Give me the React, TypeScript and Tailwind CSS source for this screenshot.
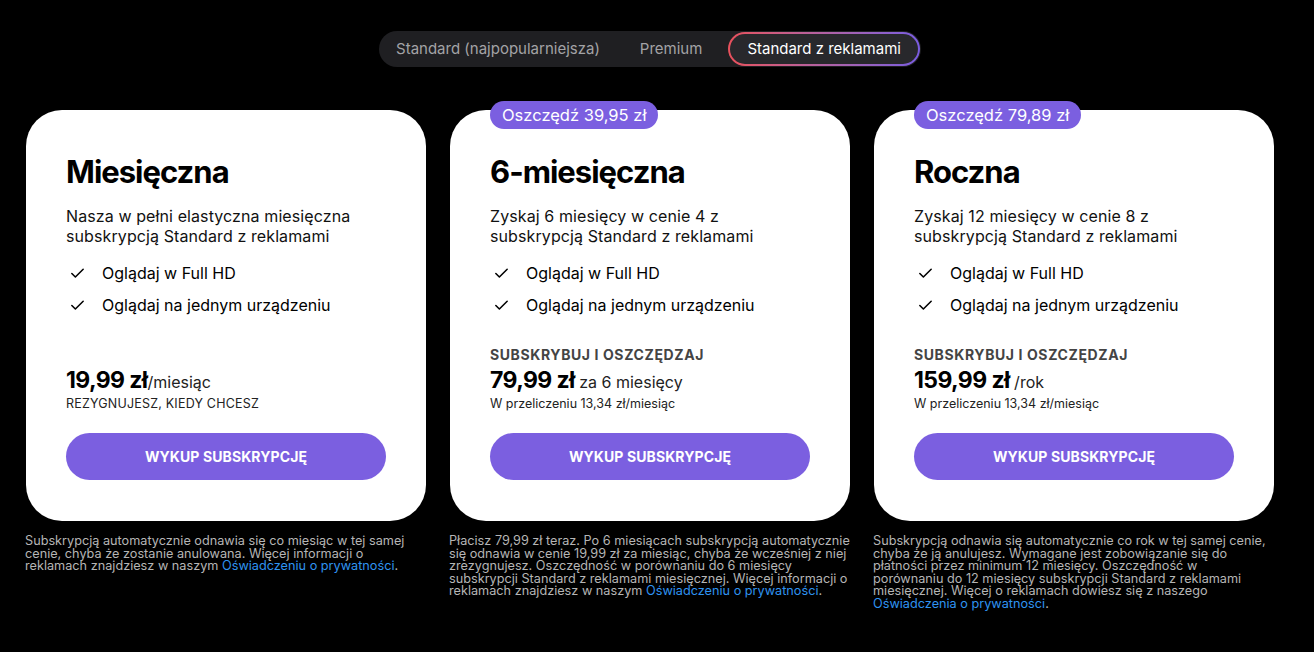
import { Check } from 'lucide-react'

type Plan = {
  title: string
  badge?: string
  desc: string[]
  eyebrow?: string
  price: string
  unit: string
  sub: string
  subUpper?: boolean
  note: string
  noteWidth: string
  link: string
}

const plans: Plan[] = [
  {
    title: 'Miesięczna',
    desc: ['Nasza w pełni elastyczna miesięczna', 'subskrypcją Standard z reklamami'],
    price: '19,99 zł',
    unit: '/miesiąc',
    sub: 'REZYGNUJESZ, KIEDY CHCESZ',
    subUpper: true,
    note: 'Subskrypcją automatycznie odnawia się co miesiąc w tej samej cenie, chyba że zostanie anulowana. Więcej informacji o reklamach znajdziesz w naszym ',
    noteWidth: 'w-[400px]',
    link: 'Oświadczeniu o prywatności',
  },
  {
    title: '6-miesięczna',
    badge: 'Oszczędź 39,95 zł',
    desc: ['Zyskaj 6 miesięcy w cenie 4 z', 'subskrypcją Standard z reklamami'],
    eyebrow: 'SUBSKRYBUJ I OSZCZĘDZAJ',
    price: '79,99 zł',
    unit: ' za 6 miesięcy',
    sub: 'W przeliczeniu 13,34 zł/miesiąc',
    note: 'Płacisz 79,99 zł teraz. Po 6 miesiącach subskrypcją automatycznie się odnawia w cenie 19,99 zł za miesiąc, chyba że wcześniej z niej zrezygnujesz. Oszczędność w porównaniu do 6 miesięcy subskrypcji Standard z reklamami miesięcznej. Więcej informacji o reklamach znajdziesz w naszym ',
    noteWidth: 'w-[406px]',
    link: 'Oświadczeniu o prywatności',
  },
  {
    title: 'Roczna',
    badge: 'Oszczędź 79,89 zł',
    desc: ['Zyskaj 12 miesięcy w cenie 8 z', 'subskrypcją Standard z reklamami'],
    eyebrow: 'SUBSKRYBUJ I OSZCZĘDZAJ',
    price: '159,99 zł',
    unit: ' /rok',
    sub: 'W przeliczeniu 13,34 zł/miesiąc',
    note: 'Subskrypcją odnawia się automatycznie co rok w tej samej cenie, chyba że ją anulujesz. Wymagane jest zobowiązanie się do płatności przez minimum 12 miesięcy. Oszczędność w\nporównaniu do 12 miesięcy subskrypcji Standard z reklamami\nmiesięcznej. Więcej o reklamach dowiesz się z naszego\n',
    noteWidth: 'w-[406px]',
    link: 'Oświadczenia o prywatności',
  },
]

const features = ['Oglądaj w Full HD', 'Oglądaj na jednym urządzeniu']

function PlanCard({ plan }: { plan: Plan }) {
  return (
    <div className="flex flex-col w-[400px]">
      <div className="relative bg-white rounded-[36px] h-[411px] flex flex-col px-10 pt-[42px] pb-[41px] text-black">
        {plan.badge && (
          <div className="absolute -top-[9px] left-10 bg-[#7b5fe0] text-white text-[16.5px] leading-[28px] px-3 rounded-full">
            {plan.badge}
          </div>
        )}
        <h2 className="text-[31px] leading-[40px] font-bold tracking-[-1px]">{plan.title}</h2>
        <p className="mt-[14px] text-[16px] leading-[20px] text-[#111] tracking-[0.1px]">
          {plan.desc[0]}
          <br />
          {plan.desc[1]}
        </p>
        <ul className="mt-[11px] flex flex-col">
          {features.map((f) => (
            <li key={f} className="flex items-center h-8 text-[16px]">
              <Check className="w-[17px] h-[17px] mr-[16px] ml-[3px]" strokeWidth={2.2} />
              {f}
            </li>
          ))}
        </ul>
        <div className="mt-auto">
          {plan.eyebrow && (
            <div className="text-[14px] leading-[18px] font-bold text-[#444] tracking-[0.6px]">{plan.eyebrow}</div>
          )}
          <div className="leading-[28px] mt-[2px]">
            <span className="text-[23px] font-bold tracking-[-0.6px]">{plan.price}</span>
            <span className="text-[16px] text-[#222]">{plan.unit}</span>
          </div>
          <div className={`text-[12.5px] leading-[16px] text-[#222] ${plan.subUpper ? 'tracking-[0.2px]' : ''}`}>
            {plan.sub}
          </div>
        </div>
        <button className="mt-[21px] h-[47px] w-full rounded-full bg-[#7b5fe0] text-white text-[14px] font-bold tracking-[0.1px]">
          WYKUP SUBSKRYPCJĘ
        </button>
      </div>
      <p className={`mt-[14px] text-[12.7px] leading-[12.5px] text-[#b5b5b5] -ml-px whitespace-pre-line ${plan.noteWidth}`}>
        {plan.note}
        <span className="text-[#2f93f0]">{plan.link}</span>.
      </p>
    </div>
  )
}

export default function App() {
  return (
    <div
      className="min-h-[652px] bg-black text-white pr-[14px]"
      style={{ fontFamily: 'Inter, "Noto Sans", sans-serif' }}
    >
      <div className="flex justify-center pt-[31px]">
        <div className="flex items-center h-9 rounded-full bg-[#1f1f22] text-[15px] pl-[17px] pr-px">
          <span className="text-[#a3a3a6]">Standard (najpopularniejsza)</span>
          <span className="text-[#a3a3a6] ml-[40px] mr-[26px]">Premium</span>
          <div className="rounded-full p-[2px] bg-gradient-to-r from-[#e8505b] to-[#7a5ce0]">
            <div className="rounded-full bg-[#28282c] h-[30px] px-[17px] flex items-center text-white">
              Standard z reklamami
            </div>
          </div>
        </div>
      </div>
      <div className="flex justify-center gap-6 mt-[43px]">
        {plans.map((p) => (
          <PlanCard key={p.title} plan={p} />
        ))}
      </div>
    </div>
  )
}
